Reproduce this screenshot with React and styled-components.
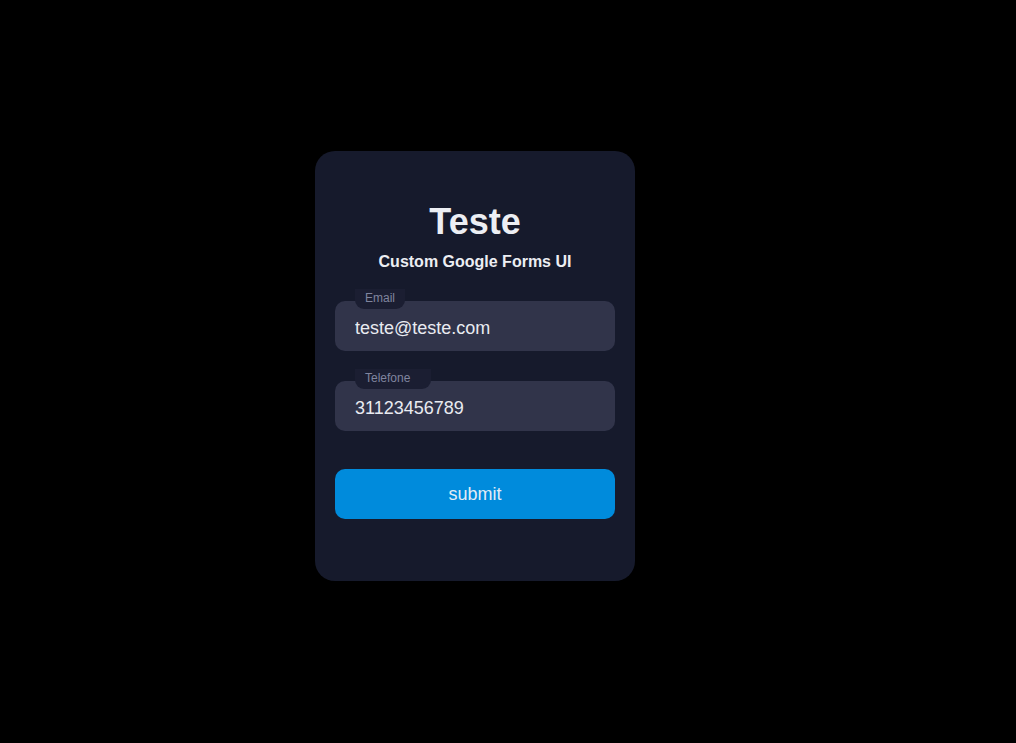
import React from "react";
import styled, { createGlobalStyle } from "styled-components";

const Global = createGlobalStyle`
  html, body { margin: 0; padding: 0; background: #000; }
  body { font-family: "Liberation Sans", Arial, sans-serif; }
  * { box-sizing: border-box; }
`;

const Page = styled.div`
  min-height: 743px;
  background: #000;
  display: flex;
  align-items: flex-start;
  padding: 151px 0 0 315px;
`;

const Card = styled.div`
  width: 320px;
  height: 430px;
  background: #161a2c;
  border-radius: 20px;
  padding: 50px 20px 62px;
  display: flex;
  flex-direction: column;
`;

const Title = styled.h1`
  margin: 0;
  font-size: 36px;
  line-height: 41px;
  font-weight: 700;
  text-align: center;
  color: #eceef3;
`;

const Subtitle = styled.h2`
  margin: 11px 0 0;
  font-size: 16px;
  line-height: 18px;
  font-weight: 700;
  text-align: center;
  color: #eceef3;
`;

const Form = styled.form`
  margin-top: 30px;
  display: flex;
  flex-direction: column;
  gap: 30px;
`;

const Field = styled.div`
  position: relative;
`;

const Label = styled.label`
  position: absolute;
  left: 20px;
  top: -12px;
  height: 20px;
  min-width: ${(p) => p.$width}px;
  padding: 2px 10px 0;
  font-size: 12px;
  line-height: 14px;
  color: #80859f;
  background: #1b1e32;
  border-radius: 0 0 9px 9px;
`;

const Input = styled.input`
  display: block;
  width: 100%;
  height: 50px;
  border: none;
  outline: none;
  border-radius: 10px;
  background: #31344a;
  color: #e9ebf1;
  font-family: "Liberation Sans", Arial, sans-serif;
  font-size: 18px;
  padding: 5px 20px 0;
`;

const Button = styled.button`
  margin-top: 8px;
  height: 50px;
  width: 100%;
  border: none;
  border-radius: 10px;
  background: #008bdc;
  color: #e3ecf6;
  font-family: "Liberation Sans", Arial, sans-serif;
  font-size: 18px;
  cursor: pointer;
`;

export default function App() {
  return (
    <>
      <Global />
      <Page>
        <Card>
          <Title>Teste</Title>
          <Subtitle>Custom Google Forms UI</Subtitle>
          <Form onSubmit={(e) => e.preventDefault()}>
            <Field>
              <Input defaultValue="teste@teste.com" />
              <Label $width={50}>Email</Label>
            </Field>
            <Field>
              <Input defaultValue="31123456789" />
              <Label $width={76}>Telefone</Label>
            </Field>
            <Button type="submit">submit</Button>
          </Form>
        </Card>
      </Page>
    </>
  );
}
